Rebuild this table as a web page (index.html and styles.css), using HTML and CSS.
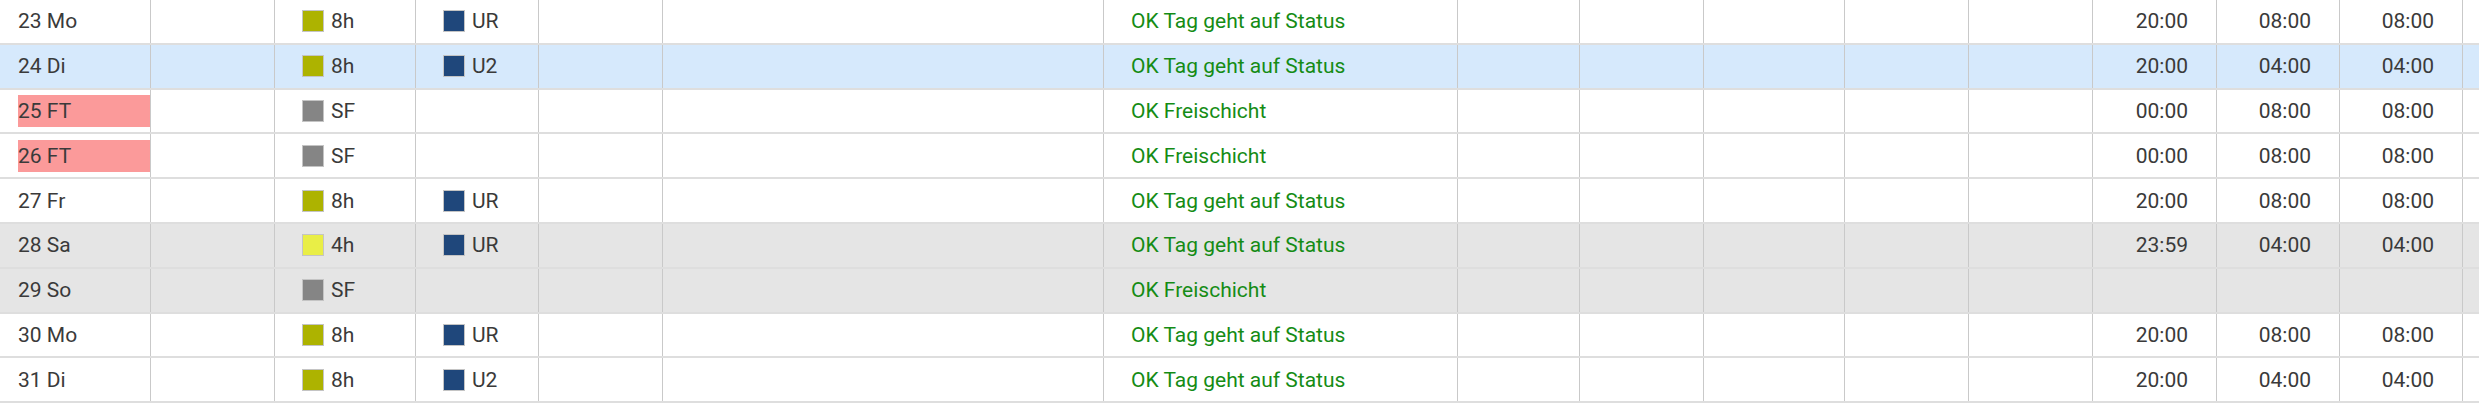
FILE: index.html
```html
<!DOCTYPE html>
<html lang="de">
<head>
<meta charset="utf-8">
<title>Dienstplan</title>
<link rel="stylesheet" href="styles.css">
</head>
<body>
<div class="table">
  <div class="row">
    <div class="cell first">23 Mo</div><div class="cell"></div>
    <div class="cell sw"><span class="swatch olive"></span>8h</div>
    <div class="cell sw"><span class="swatch navy"></span>UR</div>
    <div class="cell"></div><div class="cell"></div>
    <div class="cell ok">OK Tag geht auf Status</div>
    <div class="cell"></div><div class="cell"></div><div class="cell"></div><div class="cell"></div><div class="cell"></div>
    <div class="cell time">20:00</div><div class="cell time">08:00</div><div class="cell time">08:00</div><div class="cell last"></div>
  </div>
  <div class="row selected">
    <div class="cell first">24 Di</div><div class="cell"></div>
    <div class="cell sw"><span class="swatch olive"></span>8h</div>
    <div class="cell sw"><span class="swatch navy"></span>U2</div>
    <div class="cell"></div><div class="cell"></div>
    <div class="cell ok">OK Tag geht auf Status</div>
    <div class="cell"></div><div class="cell"></div><div class="cell"></div><div class="cell"></div><div class="cell"></div>
    <div class="cell time">20:00</div><div class="cell time">04:00</div><div class="cell time">04:00</div><div class="cell last"></div>
  </div>
  <div class="row">
    <div class="cell first"><span class="holiday">25 FT</span></div><div class="cell"></div>
    <div class="cell sw"><span class="swatch grey"></span>SF</div>
    <div class="cell"></div>
    <div class="cell"></div><div class="cell"></div>
    <div class="cell ok">OK Freischicht</div>
    <div class="cell"></div><div class="cell"></div><div class="cell"></div><div class="cell"></div><div class="cell"></div>
    <div class="cell time">00:00</div><div class="cell time">08:00</div><div class="cell time">08:00</div><div class="cell last"></div>
  </div>
  <div class="row">
    <div class="cell first"><span class="holiday">26 FT</span></div><div class="cell"></div>
    <div class="cell sw"><span class="swatch grey"></span>SF</div>
    <div class="cell"></div>
    <div class="cell"></div><div class="cell"></div>
    <div class="cell ok">OK Freischicht</div>
    <div class="cell"></div><div class="cell"></div><div class="cell"></div><div class="cell"></div><div class="cell"></div>
    <div class="cell time">00:00</div><div class="cell time">08:00</div><div class="cell time">08:00</div><div class="cell last"></div>
  </div>
  <div class="row">
    <div class="cell first">27 Fr</div><div class="cell"></div>
    <div class="cell sw"><span class="swatch olive"></span>8h</div>
    <div class="cell sw"><span class="swatch navy"></span>UR</div>
    <div class="cell"></div><div class="cell"></div>
    <div class="cell ok">OK Tag geht auf Status</div>
    <div class="cell"></div><div class="cell"></div><div class="cell"></div><div class="cell"></div><div class="cell"></div>
    <div class="cell time">20:00</div><div class="cell time">08:00</div><div class="cell time">08:00</div><div class="cell last"></div>
  </div>
  <div class="row weekend">
    <div class="cell first">28 Sa</div><div class="cell"></div>
    <div class="cell sw"><span class="swatch yellow"></span>4h</div>
    <div class="cell sw"><span class="swatch navy"></span>UR</div>
    <div class="cell"></div><div class="cell"></div>
    <div class="cell ok">OK Tag geht auf Status</div>
    <div class="cell"></div><div class="cell"></div><div class="cell"></div><div class="cell"></div><div class="cell"></div>
    <div class="cell time">23:59</div><div class="cell time">04:00</div><div class="cell time">04:00</div><div class="cell last"></div>
  </div>
  <div class="row weekend">
    <div class="cell first">29 So</div><div class="cell"></div>
    <div class="cell sw"><span class="swatch grey"></span>SF</div>
    <div class="cell"></div>
    <div class="cell"></div><div class="cell"></div>
    <div class="cell ok">OK Freischicht</div>
    <div class="cell"></div><div class="cell"></div><div class="cell"></div><div class="cell"></div><div class="cell"></div>
    <div class="cell time"></div><div class="cell time"></div><div class="cell time"></div><div class="cell last"></div>
  </div>
  <div class="row">
    <div class="cell first">30 Mo</div><div class="cell"></div>
    <div class="cell sw"><span class="swatch olive"></span>8h</div>
    <div class="cell sw"><span class="swatch navy"></span>UR</div>
    <div class="cell"></div><div class="cell"></div>
    <div class="cell ok">OK Tag geht auf Status</div>
    <div class="cell"></div><div class="cell"></div><div class="cell"></div><div class="cell"></div><div class="cell"></div>
    <div class="cell time">20:00</div><div class="cell time">08:00</div><div class="cell time">08:00</div><div class="cell last"></div>
  </div>
  <div class="row">
    <div class="cell first">31 Di</div><div class="cell"></div>
    <div class="cell sw"><span class="swatch olive"></span>8h</div>
    <div class="cell sw"><span class="swatch navy"></span>U2</div>
    <div class="cell"></div><div class="cell"></div>
    <div class="cell ok">OK Tag geht auf Status</div>
    <div class="cell"></div><div class="cell"></div><div class="cell"></div><div class="cell"></div><div class="cell"></div>
    <div class="cell time">20:00</div><div class="cell time">04:00</div><div class="cell time">04:00</div><div class="cell last"></div>
  </div>
</div>
</body>
</html>
```

FILE: styles.css
```css
html, body {
  margin: 0;
  padding: 0;
  background: #ffffff;
}

body {
  font-family: Roboto, "Liberation Sans", sans-serif;
  font-size: 21px;
  color: #3a3a3a;
  overflow: hidden;
}

.table {
  display: flex;
  flex-direction: column;
  width: 2479px;
}

.row {
  display: grid;
  grid-template-columns: 151px 124px 141px 123px 124px 441px 354px 122px 124px 141px 124px 124px 124px 123px 123px 1fr;
  height: 44.8px;
  box-sizing: border-box;
  border-bottom: 2px solid #dedede;
  background: #ffffff;
}

.row.selected {
  background: #d6e9fc;
}

.row.weekend {
  background: #e5e5e5;
}

.cell {
  box-sizing: border-box;
  border-right: 1px solid #c9c9c9;
  display: flex;
  align-items: center;
  padding: 0 0 0 27px;
  white-space: nowrap;
  overflow: hidden;
}

.cell.last {
  border-right: none;
}

.cell.first {
  padding-left: 18px;
}

.holiday {
  display: flex;
  align-items: center;
  flex: 1;
  height: 32px;
  background: #fb9a9a;
}

.swatch {
  display: inline-block;
  width: 20px;
  height: 20px;
  border: 1px solid #c4c4c4;
  margin-right: 7px;
  flex: none;
}

.swatch.olive { background: #adb300; }
.swatch.navy { background: #1f477b; }
.swatch.grey { background: #858585; }
.swatch.yellow { background: #e9ee46; }

.cell.ok {
  color: #158c15;
}

.cell.time {
  justify-content: flex-end;
  padding: 0 28px 0 0;
}
```
